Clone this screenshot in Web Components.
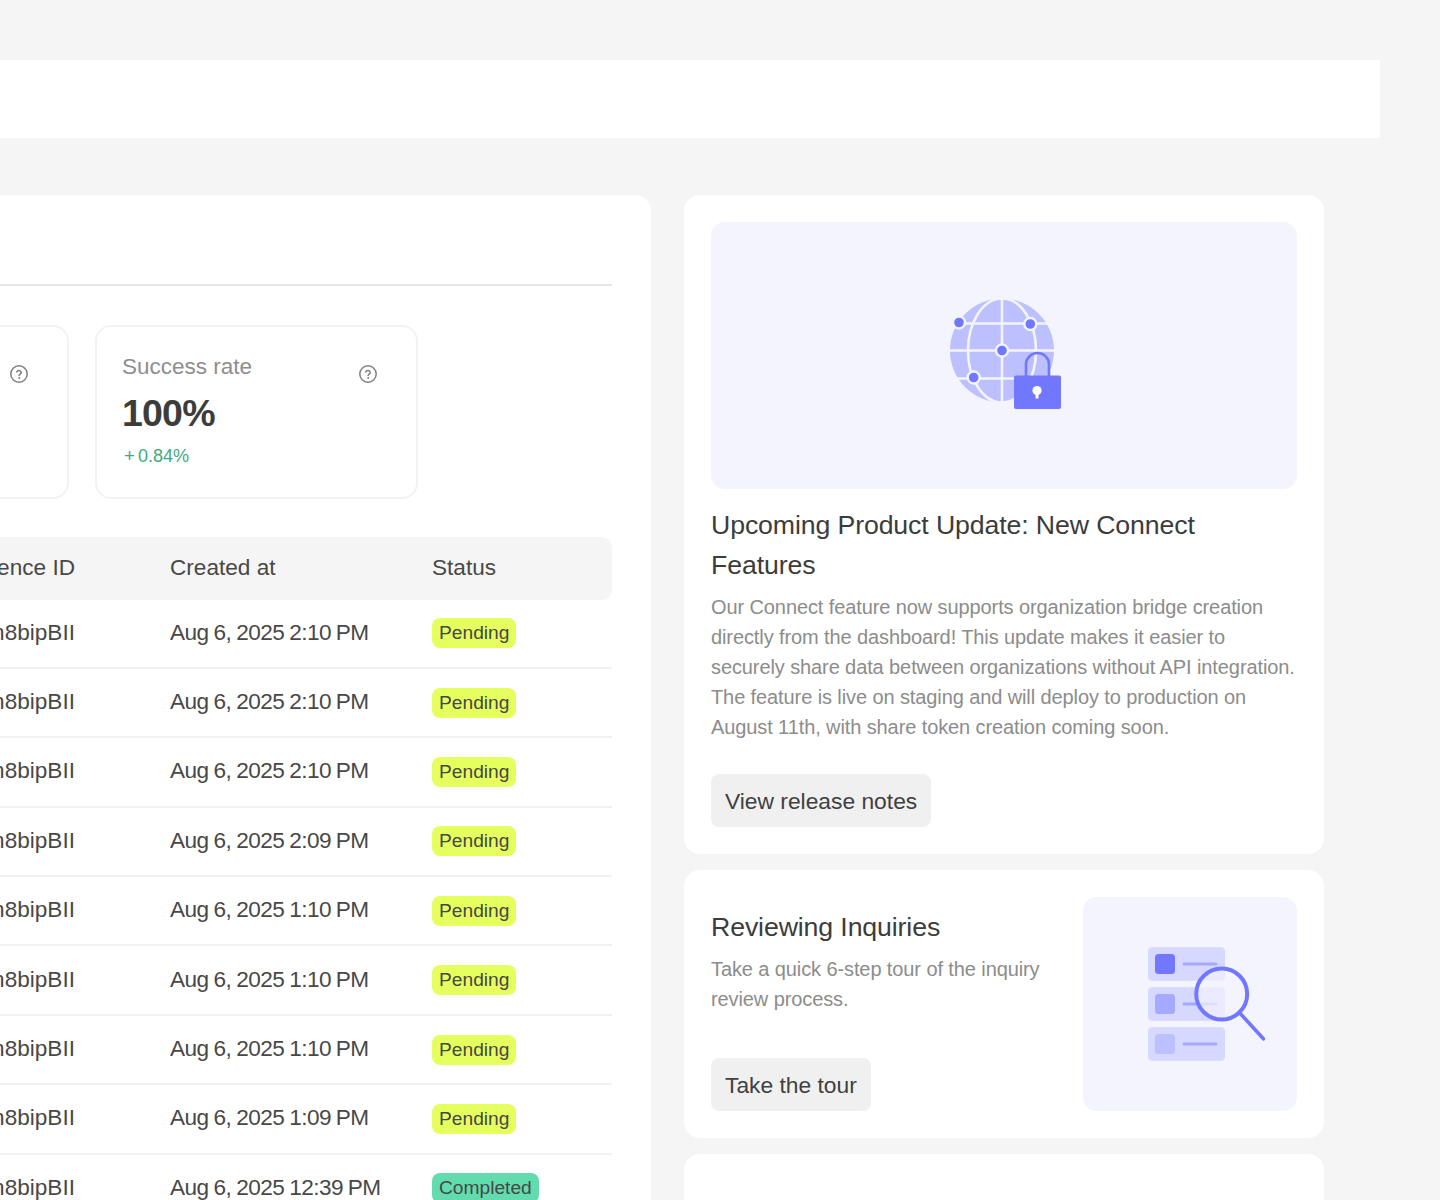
<!DOCTYPE html>
<html lang="en">
<head>
<meta charset="utf-8">
<title>Dashboard</title>
<style>
  html, body { margin: 0; height: 1200px; overflow: hidden; background: #f5f5f5; }
  body { font-family: "Liberation Sans", Arial, sans-serif; color: #404040; }
  .main { display: flex; gap: 33px; margin-top: 57px; align-items: flex-start; }
  .side { display: flex; flex-direction: column; gap: 16px; width: 640px; flex: none; }
</style>
</head>
<body>
<top-bar></top-bar>
<div class="main">
  <left-panel>
    <stat-card label="Success rate" value="100%" delta="0.84%" slot="stats"></stat-card>
    <data-table></data-table>
  </left-panel>
  <div class="side">
    <update-card></update-card>
    <tour-card></tour-card>
    <blank-card></blank-card>
  </div>
</div>

<script>
class TopBar extends HTMLElement {
  constructor() {
    super();
    this.attachShadow({ mode: "open" });
    this.shadowRoot.innerHTML = `<style>
      :host { display: block; height: 78px; margin: 60px 60px 0 0; background: #fff; }
    </style>`;
  }
}
customElements.define("top-bar", TopBar);

const helpIcon = `<svg width="20" height="20" viewBox="0 0 20 20" fill="none" stroke="#808080" stroke-width="1.5" stroke-linecap="round">
  <circle cx="10" cy="10" r="8.2"/>
  <path d="M7.7 8a2.4 2.4 0 0 1 4.6.5c0 1.5-2.2 1.7-2.2 3"/>
  <circle cx="10.1" cy="14" r=".5" fill="#808080" stroke-width="1"/>
</svg>`;

class StatCard extends HTMLElement {
  constructor() {
    super();
    this.attachShadow({ mode: "open" });
  }
  connectedCallback() {
    const label = this.getAttribute("label") || "";
    const value = this.getAttribute("value") || "";
    const delta = this.getAttribute("delta") || "";
    this.shadowRoot.innerHTML = `<style>
      :host { display: flex; flex: none; box-sizing: border-box; width: 322.5px; height: 174px; padding: 25px 37.5px 0 25px;
        border: 2px solid #f2f2f2; border-radius: 16px; background: #fff; }
      .body { flex: 1; }
      .label { font-size: 22.5px; line-height: 30px; color: #8e8e8e; }
      .value { font-size: 37.5px; line-height: 50px; margin-top: 6px; font-weight: 700; color: #3c3c3c; letter-spacing: -.8px; }
      .delta { font-size: 18px; line-height: 26px; margin: 5px 0 0 2px; color: #3fa982; }
      .delta span { font-size: 18.7px; margin-right: 3px; }
      svg { margin-top: 12px; flex: none; }
    </style>
    <div class="body">
      <div class="label">${label}</div>
      <div class="value">${value}</div>
      <div class="delta"><span>+</span>${delta}</div>
    </div>${helpIcon}`;
  }
}
customElements.define("stat-card", StatCard);

class LeftPanel extends HTMLElement {
  constructor() {
    super();
    this.attachShadow({ mode: "open" });
    this.shadowRoot.innerHTML = `<style>
      :host { display: block; flex: none; box-sizing: border-box; width: 651px; height: 1100px; padding-right: 39px;
        background: #fff; border-radius: 0 16px 0 0; overflow: hidden; }
      .head { height: 89px; border-bottom: 2px solid #e6e6e6; }
      .stats { display: flex; justify-content: flex-end; gap: 26px; padding-right: 194.5px; margin: 39px 0 38px; }
      .ghost { display: flex; flex: none; box-sizing: border-box; width: 322px; height: 174px; padding: 38px 38.5px 0 0;
        justify-content: flex-end; border: 2px solid #f2f2f2; border-radius: 16px; }
      .ghost svg { flex: none; margin-top: -1px; }
    </style>
    <div class="head"></div>
    <div class="stats">
      <div class="ghost">${helpIcon}</div>
      <slot name="stats"></slot>
    </div>
    <slot></slot>`;
  }
}
customElements.define("left-panel", LeftPanel);

class StatusPill extends HTMLElement {
  constructor() {
    super();
    this.attachShadow({ mode: "open" });
    this.shadowRoot.innerHTML = `<style>
      :host { display: inline-block; padding: 0 7px; height: 30px; line-height: 30px; font-size: 19.2px; border-radius: 8px;
        background: #e5ff5e; color: #474747; }
      :host([tone="done"]) { background: #62dcae; }
    </style><slot></slot>`;
  }
}
customElements.define("status-pill", StatusPill);

class DataTable extends HTMLElement {
  constructor() {
    super();
    this.attachShadow({ mode: "open" });
  }
  connectedCallback() {
    const rows = [
      ["Aug 6, 2025 2:10 PM", "Pending"],
      ["Aug 6, 2025 2:10 PM", "Pending"],
      ["Aug 6, 2025 2:10 PM", "Pending"],
      ["Aug 6, 2025 2:09 PM", "Pending"],
      ["Aug 6, 2025 1:10 PM", "Pending"],
      ["Aug 6, 2025 1:10 PM", "Pending"],
      ["Aug 6, 2025 1:10 PM", "Pending"],
      ["Aug 6, 2025 1:09 PM", "Pending"],
      ["Aug 6, 2025 12:39 PM", "Completed"],
    ];
    const body = rows.map(([date, status]) => `
      <div class="row">
        <div class="id"><span>n8bipBII</span></div>
        <div class="date">${date}</div>
        <div class="st"><status-pill ${status === "Completed" ? 'tone="done"' : ""}>${status}</status-pill></div>
      </div>`).join("");
    this.shadowRoot.innerHTML = `<style>
      :host { display: block; font-size: 22.6px; color: #484848; }
      .row { display: grid; grid-template-columns: 75px 95px 262px 1fr; height: 67.4px; align-items: center;
        border-bottom: 2px solid #f2f2f2; white-space: nowrap; }
      .row > :nth-child(2) { grid-column: 3; }
      .row > :nth-child(3) { grid-column: 4; }
      .id { display: flex; justify-content: flex-end; overflow: hidden; }
      .row:not(.head) .id, .date { padding-bottom: 1px; }
      .date { letter-spacing: -.55px; word-spacing: -.8px; }
      .st { display: flex; }
      .head { height: 62.5px; border: 0; background: #f5f5f5; border-radius: 0 10px 10px 0; }
    </style>
    <div class="row head">
      <div class="id"><span>Reference ID</span></div>
      <div>Created at</div>
      <div>Status</div>
    </div>${body}`;
  }
}
customElements.define("data-table", DataTable);

const cardStyles = `
  :host { display: block; box-sizing: border-box; background: #fff; border-radius: 16px; padding: 27px; }
  h3 { margin: 0; font-weight: 400; font-size: 26.7px; line-height: 40px; color: #3c3c3c; letter-spacing: -.12px; }
  p { margin: 0; font-size: 20px; line-height: 30px; color: #8c8c8c; letter-spacing: -.1px; }
  .btn { display: inline-block; box-sizing: border-box; height: 53px; line-height: 54px; padding: 0 14px; font-size: 22.8px;
    border-radius: 8px; background: #f0f0f0; color: #404040; }
  .art { background: #f4f4ff; border-radius: 14px; }
  svg { display: block; }
`;

class UpdateCard extends HTMLElement {
  constructor() {
    super();
    this.attachShadow({ mode: "open" });
    this.shadowRoot.innerHTML = `<style>${cardStyles}
      :host { height: 659px; }
      .art { height: 267px; display: flex; align-items: center; justify-content: center; margin-bottom: 16px; }
      h3 { margin-bottom: 7px; }
      .btn { margin-top: 32px; }
    </style>
    <div class="art">
      <svg width="120" height="120" viewBox="944 295.5 120 120">
        <circle cx="1002" cy="350" r="52" fill="#bcc0ff"/>
        <g fill="none" stroke="#f4f4ff" stroke-width="2.6">
          <ellipse cx="1002" cy="350" rx="34" ry="52"/>
          <path d="M1002 298v104M950 350h104M957 323h90M957 378h90"/>
        </g>
        <g fill="#7277ff" stroke="#f4f4ff" stroke-width="2.4">
          <circle cx="959" cy="322" r="6"/>
          <circle cx="1030.3" cy="323.5" r="6"/>
          <circle cx="1002" cy="350" r="6"/>
          <circle cx="973.7" cy="377" r="6"/>
        </g>
        <path d="M1026 376v-12a11.500 11.500 0 0 1 23 0v12" fill="none" stroke="#7277ff" stroke-width="2.600"/>
        <rect x="1014" y="375" width="47" height="33.500" rx="2" fill="#7277ff"/>
        <circle cx="1037" cy="390" r="4.600" fill="#fff"/>
        <path d="M1035.500 391h3v7h-3z" fill="#fff"/>
      </svg>
    </div>
    <h3>Upcoming Product Update: New Connect Features</h3>
    <p>Our Connect feature now supports organization bridge creation directly from the dashboard! This update makes it easier to securely share data between organizations without API integration. The feature is live on staging and will deploy to production on August 11th, with share token creation coming soon.</p>
    <div class="btn">View release notes</div>`;
  }
}
customElements.define("update-card", UpdateCard);

class TourCard extends HTMLElement {
  constructor() {
    super();
    this.attachShadow({ mode: "open" });
    this.shadowRoot.innerHTML = `<style>${cardStyles}
      :host { height: 268px; display: flex; justify-content: space-between; }
      .copy { width: 340px; display: flex; flex-direction: column; padding-top: 10px; }
      h3 { margin-bottom: 7px; }
      .btn { margin-top: auto; align-self: flex-start; }
      .art { width: 214px; height: 214px; flex: none; }
    </style>
    <div class="copy">
      <h3>Reviewing Inquiries</h3>
      <p>Take a quick 6-step tour of the inquiry review process.</p>
      <div class="btn">Take the tour</div>
    </div>
    <div class="art">
      <svg width="214" height="214" viewBox="1083 897 214 214">
        <g fill="#d6d8ff">
          <rect x="1148" y="947.300" width="77" height="33.400" rx="4"/>
          <rect x="1148" y="987.300" width="77" height="33.400" rx="4"/>
          <rect x="1148" y="1027.300" width="77" height="33.400" rx="4"/>
        </g>
        <rect x="1155" y="954" width="20" height="20" rx="3.500" fill="#7277ff"/>
        <rect x="1155" y="994" width="20" height="20" rx="3.500" fill="#a5a9ff"/>
        <rect x="1155" y="1034" width="20" height="20" rx="3.500" fill="#bcc0ff"/>
        <path d="M1184 964h32M1184 1004h32M1184 1044h32" stroke="#a5a9ff" stroke-width="3" stroke-linecap="round"/>
        <circle cx="1221.700" cy="994" r="25.500" fill="#f4f4ff" fill-opacity=".7" stroke="#7277ff" stroke-width="4"/>
        <path d="M1240.700 1014l22.700 24.800" stroke="#7277ff" stroke-width="3.600" stroke-linecap="round"/>
      </svg>
    </div>`;
  }
}
customElements.define("tour-card", TourCard);

class BlankCard extends HTMLElement {
  constructor() {
    super();
    this.attachShadow({ mode: "open" });
    this.shadowRoot.innerHTML = `<style>
      :host { display: block; height: 200px; background: #fff; border-radius: 16px; }
    </style>`;
  }
}
customElements.define("blank-card", BlankCard);
</script>
</body>
</html>
